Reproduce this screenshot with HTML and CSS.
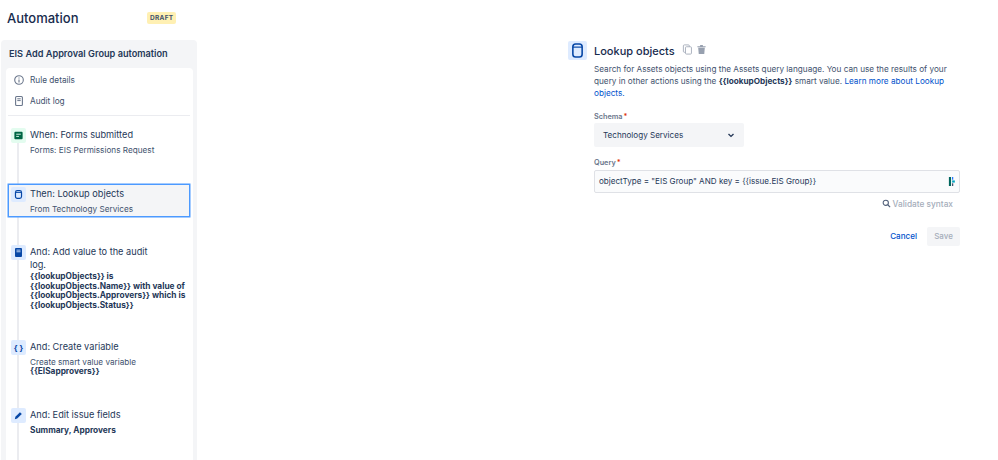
FILE: index.html
```html
<!DOCTYPE html>
<html>
<head>
	<meta charset="UTF-8">
	<title>Automation</title>
	<link rel="stylesheet" href="styles.css">
</head>
<body>
	<div class="page">
		<div class="left">
			<div class="pageHead">
				<h1>Automation</h1>
				<span class="draft">DRAFT</span>
			</div>
			<div class="rulePanel">
				<h2>EIS Add Approval Group automation</h2>
				<div class="ruleCard">
					<div class="navRow">
						<svg class="navIcon" viewBox="0 0 12 12"><circle cx="6" cy="6" r="4.3" fill="none" stroke="#6b778c" stroke-width="1.1"/><path d="M6 5.4v3M6 3.4v1" stroke="#6b778c" stroke-width="1.1"/></svg>
						<span>Rule details</span>
					</div>
					<div class="navRow">
						<svg class="navIcon" viewBox="0 0 12 12"><rect x="2.6" y="1.5" width="6.8" height="9" rx="1" fill="none" stroke="#6b778c" stroke-width="1.1"/><path d="M4.3 3.8h3.4M4.3 5.6h3.4" stroke="#6b778c"/></svg>
						<span>Audit log</span>
					</div>
					<div class="divider"></div>

					<div class="steps">
						<div class="timeline"></div>

						<div class="step stepWhen">
							<div class="stepIcon green">
								<svg viewBox="0 0 12 12"><rect x="1.5" y="2" width="9" height="8" rx="1" fill="#006644"/><path d="M3.5 4.6h5M3.5 7h3" stroke="#e3fcef"/></svg>
							</div>
							<div class="stepText">
								<div class="stepTitle">When: Forms submitted</div>
								<div class="stepSub">Forms: EIS Permissions Request</div>
							</div>
						</div>

						<div class="step stepThen selected">
							<div class="stepIcon blue">
								<svg viewBox="0 0 12 12"><rect x="2.7" y="1.7" width="6.6" height="8.6" rx="2" fill="none" stroke="#0747a6" stroke-width="1.3"/><path d="M2.7 3.8h6.6" stroke="#0747a6"/></svg>
							</div>
							<div class="stepText">
								<div class="stepTitle">Then: Lookup objects</div>
								<div class="stepSub">From Technology Services</div>
							</div>
						</div>

						<div class="step stepAudit">
							<div class="stepIcon blue">
								<svg viewBox="0 0 12 12"><rect x="2.2" y="1.2" width="7.6" height="9.6" rx="1" fill="#0747a6"/><path d="M3.8 3.4h4.4M3.8 5.2h4.4" stroke="#deebff" stroke-width=".9"/></svg>
							</div>
							<div class="stepText">
								<div class="stepTitle narrow">And: Add value to the audit log.</div>
								<div class="stepBold auditBold">{{lookupObjects}} is {{lookupObjects.Name}} with value of {{lookupObjects.Approvers}} which is {{lookupObjects.Status}}</div>
							</div>
						</div>

						<div class="step stepVar">
							<div class="stepIcon blue">
								<span class="braces">{ }</span>
							</div>
							<div class="stepText">
								<div class="stepTitle">And: Create variable</div>
								<div class="stepSub">Create smart value variable</div>
								<div class="stepBold">{{EISapprovers}}</div>
							</div>
						</div>

						<div class="step stepEdit">
							<div class="stepIcon blue">
								<svg viewBox="0 0 12 12"><path d="M2 10l.6-2.6 5-5 2 2-5 5z" fill="#0747a6"/></svg>
							</div>
							<div class="stepText">
								<div class="stepTitle">And: Edit issue fields</div>
								<div class="stepBold summary">Summary, Approvers</div>
							</div>
						</div>
					</div>
				</div>
			</div>
		</div>

		<div class="editor">
			<div class="editorHead">
				<div class="bigIcon">
					<svg viewBox="0 0 18 18"><rect x="4.6" y="2.8" width="8.8" height="12.4" rx="2.6" fill="none" stroke="#0747a6" stroke-width="1.5"/><path d="M4.6 5.8h8.8" stroke="#0747a6" stroke-width="1.1"/></svg>
				</div>
				<h3>Lookup objects</h3>
				<svg class="headAction" viewBox="0 0 12 12"><rect x="1.5" y="1" width="6.5" height="8" rx="1" fill="none" stroke="#a5adba"/><rect x="3.8" y="3" width="6.5" height="8" rx="1" fill="#fff" stroke="#a5adba"/></svg>
				<svg class="headAction trash" viewBox="0 0 12 12"><path d="M1.5 2.4h9v1.2h-9zM4.5 1h3v1.4h-3zM2.4 4.2h7.2L9 11H3z" fill="#97a0af"/></svg>
			</div>
			<div class="editorBody">
				<p class="desc">Search for Assets objects using the Assets query language. You can use the results of your query in other actions using the <b>{{lookupObjects}}</b> smart value. <a href="#">Learn more about Lookup objects.</a></p>

				<div class="fieldLabel schemaLabel">Schema<span class="req">*</span></div>
				<div class="selectBox">
					<span>Technology Services</span>
					<svg class="chevron" viewBox="0 0 10 10"><path d="M2.5 4l2.5 2.4L7.5 4" fill="none" stroke="#253858" stroke-width="1.4"/></svg>
				</div>

				<div class="fieldLabel queryLabel">Query<span class="req">*</span></div>
				<div class="queryBox">
					<span>objectType = "EIS Group" AND key = {{issue.EIS Group}}</span>
					<svg class="queryIcon" viewBox="0 0 10 12"><rect x="1" y="1" width="2.4" height="10" fill="#00665e"/><rect x="4.6" y="1" width="1.2" height="3" fill="#0065ff"/><rect x="4.6" y="4.8" width="3" height="2.4" fill="#00a3bf"/><rect x="4.6" y="8" width="1.2" height="3" fill="#253858"/></svg>
				</div>

				<div class="validate">
					<svg viewBox="0 0 10 10"><circle cx="4.2" cy="4.2" r="2.9" fill="none" stroke="#505f79" stroke-width="1.2"/><path d="M6.4 6.4L9 9" stroke="#505f79" stroke-width="1.3"/></svg>
					<span>Validate syntax</span>
				</div>

				<div class="actions">
					<a class="cancel" href="#">Cancel</a>
					<button class="save">Save</button>
				</div>
			</div>
		</div>
	</div>
</body>
</html>
```

FILE: styles.css
```css
html, body {
	margin: 0;
	height: 460px;
	overflow: hidden;
	background-color: #fff;
}
body {
	font-family: Inter, "Liberation Sans", sans-serif;
	color: #253858;
	font-size: 9px;
}
.page {
	display: flex;
	height: 460px;
}
.left {
	width: 196px;
	margin-left: 1px;
	flex-shrink: 0;
}
.pageHead {
	display: flex;
	align-items: center;
	height: 40px;
	padding-left: 6px;
	box-sizing: border-box;
	padding-bottom: 4px;
}
.pageHead h1 {
	margin: 0;
	font-size: 13px;
	font-weight: 500;
	color: #172b4d;
	width: 140px;
}
.draft {
	background-color: #fff0b3;
	color: #42526e;
	font-size: 6.5px;
	font-weight: 700;
	letter-spacing: .3px;
	padding: 2px 3px;
	border-radius: 2px;
}
.rulePanel {
	background-color: #f4f5f7;
	border-radius: 4px 4px 0 0;
	height: 420px;
	padding: 0 4px 0 5px;
	box-sizing: border-box;
}
.rulePanel h2 {
	margin: 0;
	height: 28px;
	line-height: 28px;
	padding-left: 3px;
	font-size: 9.2px;
	font-weight: 600;
	color: #253858;
	white-space: nowrap;
}
.ruleCard {
	background-color: #fff;
	border-radius: 4px 4px 0 0;
	height: 392px;
	padding: 1px 3px 0 2px;
	box-sizing: border-box;
}
.navRow {
	display: flex;
	align-items: center;
	height: 21px;
	padding-left: 5px;
	color: #42526e;
	font-size: 8.25px;
}
.navIcon {
	width: 12px;
	height: 12px;
	margin-right: 5px;
}
.divider {
	height: 1px;
	background-color: #ebecf0;
	margin-top: 4px;
}
.steps {
	position: relative;
}
.timeline { /* line behind the step icons */
	position: absolute;
	left: 9px;
	top: 12px;
	width: 2px;
	height: 340px;
	background-color: #ebecf0;
}
.step {
	position: relative;
	display: flex;
	box-sizing: border-box;
	padding-left: 3px;
}
.stepWhen {
	margin-top: 12px;
	height: 56px;
}
.selected {
	height: 33px;
	background-color: #f4f5f7;
	border: 1px solid #4c9aff;
	box-shadow: 0 0 0 .5px #4c9aff;
	padding-left: 2px;
	padding-top: 0;
}
.stepAudit {
	margin-top: 28px;
	height: 93px;
}
.stepVar {
	height: 68px;
	margin-top: 2px;
}
.stepEdit {
	height: 50px;
}
.stepIcon {
	width: 15px;
	height: 15px;
	border-radius: 2px;
	flex-shrink: 0;
	margin-right: 4px;
	display: flex;
	align-items: center;
	justify-content: center;
}
.stepIcon svg {
	width: 11px;
	height: 11px;
}
.green {
	background-color: #e3fcef;
}
.blue {
	background-color: #deebff;
}
.braces {
	color: #0747a6;
	font-size: 8px;
	font-weight: 700;
}
.stepText {
	min-width: 0;
}
.stepTitle {
	font-size: 9.2px;
	line-height: 13px;
	color: #253858;
}
.narrow {
	width: 125px;
}
.stepSub {
	font-size: 8.2px;
	line-height: 10px;
	color: #42526e;
	margin-top: 4px;
	white-space: nowrap;
}
.stepBold {
	font-size: 8.3px;
	line-height: 9.7px;
	font-weight: 700;
	color: #253858;
}
.auditBold {
	margin-top: 1px;
}
.summary {
	margin-top: 5px;
}
.selected .stepIcon {
	margin-top: 2px;
}
.selected .stepTitle {
	margin-top: 2px;
}
.editor {
	margin-left: 371px;
	width: 392px;
	padding-top: 41px;
}
.editorHead {
	display: flex;
	align-items: center;
	height: 19px;
}
.bigIcon {
	width: 19px;
	height: 19px;
	background-color: #deebff;
	border-radius: 2px;
	margin-right: 7px;
}
.bigIcon svg {
	width: 19px;
	height: 19px;
	display: block;
}
.editorHead h3 {
	margin: 0;
	font-size: 11px;
	font-weight: 500;
	color: #172b4d;
	margin-right: 7px;
}
.headAction {
	width: 11px;
	height: 11px;
	margin-right: 3px;
	margin-bottom: 2px;
}
.editorBody {
	padding-left: 26px;
}
.desc {
	margin: 3px 0 0 0;
	font-size: 8.2px;
	line-height: 12.2px;
	color: #42526e;
	width: 360px;
}
.desc b {
	color: #253858;
}
.desc a {
	color: #0052cc;
	text-decoration: none;
}
.fieldLabel {
	font-size: 7.3px;
	font-weight: 600;
	color: #6b778c;
	line-height: 10px;
}
.req {
	color: #de350b;
	margin-left: 1px;
}
.schemaLabel {
	margin-top: 12px;
}
.selectBox {
	display: flex;
	align-items: center;
	justify-content: space-between;
	width: 150px;
	height: 24px;
	margin-top: 1px;
	padding: 0 8px 0 9px;
	box-sizing: border-box;
	background-color: #f4f5f7;
	border-radius: 2px;
	font-size: 8.1px;
	color: #253858;
}
.chevron {
	width: 10px;
	height: 10px;
}
.queryLabel {
	margin-top: 11px;
}
.queryBox {
	display: flex;
	align-items: center;
	justify-content: space-between;
	width: 366px;
	height: 23px;
	margin-top: 2px;
	padding: 0 2px 0 4px;
	box-sizing: border-box;
	background-color: #fafbfc;
	border: 1px solid #dfe1e6;
	border-radius: 2px;
	font-size: 8.1px;
	color: #253858;
}
.queryIcon {
	width: 9px;
	height: 11px;
}
.validate {
	display: flex;
	align-items: center;
	justify-content: flex-end;
	padding-right: 7px;
	margin-top: 5px;
	height: 12px;
	font-size: 8.3px;
	font-weight: 500;
	color: #a5adba;
}
.validate svg {
	width: 9px;
	height: 9px;
	margin-right: 2px;
}
.actions {
	display: flex;
	align-items: center;
	justify-content: flex-end;
	margin-top: 17px;
	width: 366px;
}
.cancel {
	color: #0052cc;
	font-size: 8.1px;
	font-weight: 500;
	text-decoration: none;
	margin-right: 10px;
}
.save {
	width: 33px;
	height: 19px;
	border: 0;
	padding: 0;
	border-radius: 2px;
	background-color: #f4f5f7;
	color: #a5adba;
	font-family: inherit;
	font-size: 8px;
	font-weight: 500;
}
```
